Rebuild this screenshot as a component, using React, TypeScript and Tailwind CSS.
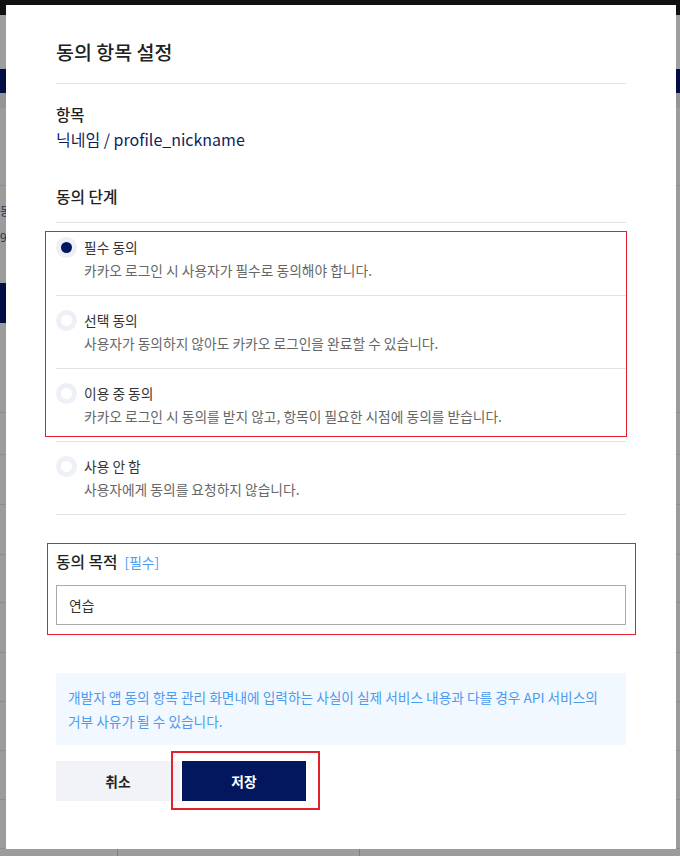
import React from "react";

const font = { fontFamily: '"Noto Sans CJK KR", "Noto Sans", sans-serif' };

type Opt = { label: string; desc: string; selected?: boolean };

const options: Opt[] = [
  { label: "필수 동의", desc: "카카오 로그인 시 사용자가 필수로 동의해야 합니다.", selected: true },
  { label: "선택 동의", desc: "사용자가 동의하지 않아도 카카오 로그인을 완료할 수 있습니다." },
  { label: "이용 중 동의", desc: "카카오 로그인 시 동의를 받지 않고, 항목이 필요한 시점에 동의를 받습니다." },
  { label: "사용 안 함", desc: "사용자에게 동의를 요청하지 않습니다." },
];

function Radio({ selected }: { selected?: boolean }) {
  return (
    <div className="flex h-[21px] w-[21px] shrink-0 items-center justify-center rounded-full bg-[#eef0f7]">
      <div className={selected ? "h-[11px] w-[11px] rounded-full bg-[#03175f]" : "h-[11px] w-[11px] rounded-full bg-white"} />
    </div>
  );
}

function Background() {
  const rows = [42, 50, 50, 48, 50, 49, 49, 49, 49];
  return (
    <div className="flex h-[856px] w-[680px] flex-col bg-[#9c9c9c]">
      <div className="h-[15px] bg-[#111111]" />
      <div className="h-[54px] bg-[#9e9e9e]" />
      <div className="h-[24px] bg-[#020d45]" />
      <div className="h-[15px] bg-[#959595]" />
      <div className="h-[78px] border-b border-[#8d8d8d]" />
      <div className="flex h-[97px] flex-col gap-[8px] pt-[16px] text-[12px] leading-[18px] text-[#2a2f55]">
        <span>동의</span>
        <span>9</span>
      </div>
      <div className="h-[40px] w-[220px] bg-[#020d45]" />
      <div className="h-[90px] border-b border-[#8d8d8d]" />
      {rows.map((h, i) => (
        <div key={i} className="flex border-b border-[#8d8d8d]" style={{ height: h }}>
          <div className="w-[118px] border-r border-[#8d8d8d]" />
          <div className="w-[242px] border-r border-[#8d8d8d]" />
          <div className="flex-1" />
        </div>
      ))}
      <div className="flex flex-1">
        <div className="w-[118px] border-r border-[#7f7f7f]" />
        <div className="w-[242px] border-r border-[#7f7f7f]" />
        <div className="flex-1" />
      </div>
    </div>
  );
}

export default function App() {
  return (
    <div className="relative h-[856px] w-[680px] overflow-hidden" style={font}>
      <Background />
      <div className="absolute left-[6px] top-[5px] flex h-[844px] w-[670px] flex-col bg-white px-[50px]">
        <div className="border-b border-[#e3e3e3] pb-[17px] pt-[33px] text-[19.5px] font-medium leading-[28px] text-[#222]">
          동의 항목 설정
        </div>
        <div className="mt-[19px] text-[15.5px] font-medium leading-[22px] text-[#222]">항목</div>
        <div className="mt-[3px] text-[16px] leading-[22px] text-[#0f1f5c]">닉네임 / profile_nickname</div>

        <div className="mt-[36px] border-b border-[#e3e3e3] pb-[14px] text-[15.75px] font-medium leading-[22px] text-[#222]">
          동의 단계
        </div>
        <div className="flex flex-col">
          {options.map((o) => (
            <div key={o.label} className="flex border-b border-[#e3e3e3] pb-[15px] pt-[14px]">
              <div className="flex flex-col">
                <div className="flex h-[20px] items-center gap-[7px]">
                  <Radio selected={o.selected} />
                  <span className="text-[13.75px] leading-[20px] text-[#333]">{o.label}</span>
                </div>
                <div className="ml-[28px] mt-[3px] text-[13.75px] leading-[20px] text-[#666]">{o.desc}</div>
              </div>
            </div>
          ))}
        </div>

        <div className="mt-[36px] flex items-center gap-[7px] leading-[22px]">
          <span className="text-[15.75px] font-medium text-[#222]">동의 목적</span>
          <span className="text-[13.75px] text-[#4a9ef5]">[필수]</span>
        </div>
        <div className="mt-[12px] flex h-[40px] items-center border border-[#aaaaaa] px-[12px] text-[13.75px] text-[#333]">
          연습
        </div>

        <div className="mt-[48px] bg-[#f2f8ff] px-[12px] py-[12px] text-[13.7px] leading-[24px] text-[#4b9bef]">
          개발자 앱 동의 항목 관리 화면내에 입력하는 사실이 실제 서비스 내용과 다를 경우 API 서비스의
          <br />
          거부 사유가 될 수 있습니다.
        </div>

        <div className="mt-[16px] flex gap-[2px]">
          <button className="flex h-[40px] w-[124px] items-center justify-center bg-[#f2f3f8] text-[13.75px] font-bold text-[#222]">
            취소
          </button>
          <button className="flex h-[40px] w-[124px] items-center justify-center bg-[#03175f] text-[13.75px] font-bold text-white">
            저장
          </button>
        </div>

        <div className="pointer-events-none absolute left-[39px] top-[226px] h-[206px] w-[582px] border border-solid border-[#e3202b]" />
        <div className="pointer-events-none absolute left-[41px] top-[538px] h-[92px] w-[589px] border border-solid border-[#e3202b]" />
        <div className="pointer-events-none absolute left-[165px] top-[746px] h-[59px] w-[149px] border-2 border-solid border-[#e3202b]" />
      </div>
    </div>
  );
}
